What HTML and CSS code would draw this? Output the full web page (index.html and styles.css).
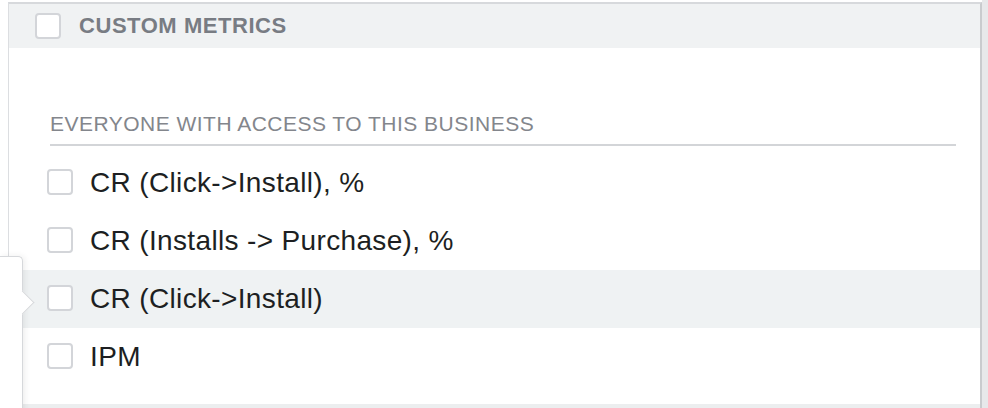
FILE: index.html
```html
<!DOCTYPE html>
<html lang="en">
<head>
    <meta charset="UTF-8">
    <title>Custom Metrics</title>
    <link rel="stylesheet" href="styles.css">
</head>
<body>
    <div class="page">
        <div class="panel">
            <div class="panel-head">
                <span class="check"></span>
                <span class="head-title">CUSTOM METRICS</span>
            </div>
            <div class="section">
                <div class="section-label">EVERYONE WITH ACCESS TO THIS BUSINESS</div>
                <ul class="metric-list">
                    <li class="metric"><span class="check"></span>CR (Click-&gt;Install), %</li>
                    <li class="metric"><span class="check"></span>CR (Installs -&gt; Purchase), %</li>
                    <li class="metric is-hover"><span class="check"></span>CR (Click-&gt;Install)</li>
                    <li class="metric"><span class="check"></span>IPM</li>
                </ul>
            </div>
            <div class="panel-foot"></div>
        </div>
        <div class="gutter"></div>
    </div>
    <!-- tooltip sitting on the left edge, arrow points into the hovered row -->
    <div class="tip"><span class="tip-arrow"></span></div>
</body>
</html>
```

FILE: styles.css
```css
html, body {
    margin: 0;
    height: 100%;
    overflow: hidden;
}
body {
    background: #fff;
    font-family: 'Liberation Sans', Arial, sans-serif;
    color: #1d1f22;
    position: relative;
}
.page {
    display: flex;
    height: 100%;
}
.panel {
    margin: 2px 0 0 8px;
    width: 971px;
    border-top: 2px solid #d7d9dc;
    border-left: 1px solid #dcdee1;
    border-right: 2px solid #c9cbce;
    display: flex;
    flex-direction: column;
}
.gutter {
    flex: 1;
    background: #e7e8ea;
}
.check {
    display: inline-block;
    box-sizing: border-box;
    width: 26px;
    height: 26px;
    border: 2px solid #d3d5d9;
    border-radius: 4px;
    background: #fff;
    flex-shrink: 0;
}
.panel-head {
    height: 44px;
    background: #f0f2f3;
    display: flex;
    align-items: center;
    padding-left: 26px;
    gap: 18px;
}
.head-title {
    font-size: 22px;
    font-weight: bold;
    color: #787c83;
    letter-spacing: 0.55px;
}
.section {
    padding-top: 64px;
}
.section-label {
    margin: 0 24px 0 41px;
    font-size: 21px;
    line-height: 24px;
    color: #83868c;
    letter-spacing: 0.48px;
    padding-bottom: 8px;
    border-bottom: 2px solid #d3d5d8;
}
.metric-list {
    list-style: none;
    margin: 8px 0 0;
    padding: 0;
}
.metric {
    height: 58px;
    display: flex;
    align-items: center;
    gap: 17px;
    padding-left: 38px;
    font-size: 28px;
    letter-spacing: 0.35px;
}
.metric .check {
    margin-top: -2px;
}
.metric.is-hover {
    background: #eff2f3;
}
.panel-foot {
    margin-top: 18px;
    flex: 1;
    background: #eceeef;
}
.tip {
    position: absolute;
    left: 0;
    top: 256px;
    bottom: -10px;
    width: 22px;
    background: #fff;
    border-top: 1px solid #d6d8db;
    border-right: 1px solid #d6d8db;
    border-top-right-radius: 5px;
    box-shadow: 2px 0 6px rgba(0, 0, 0, 0.07);
}
.tip-arrow {
    position: absolute;
    left: 14px;
    top: 37px;
    width: 16px;
    height: 16px;
    background: #fff;
    border-top: 1px solid #d6d8db;
    border-right: 1px solid #d6d8db;
    transform: rotate(45deg);
}
```
